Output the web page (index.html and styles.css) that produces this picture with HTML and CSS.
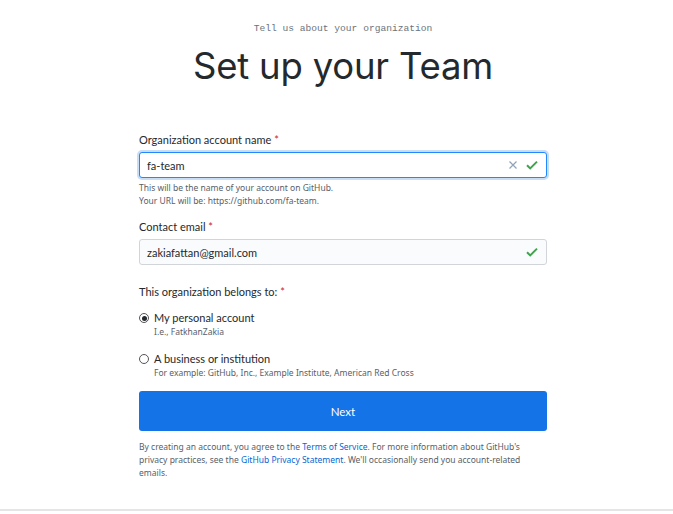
FILE: index.html
```html
<!DOCTYPE html>
<html>
<head>
<meta charset="utf-8">
<link rel="stylesheet" href="styles.css">
</head>
<body>
<div class="page">
  <header class="intro">
    <p class="eyebrow">Tell us about your organization</p>
    <h1 class="title">Set up your Team</h1>
  </header>
  <form class="form">
    <div class="field">
      <label class="label">Organization account name <span class="req">*</span></label>
      <div class="input focus">
        <span class="value">fa-team</span>
        <span class="icons">
          <svg class="x" width="10" height="10" viewBox="0 0 10 10"><path d="M1.5 1.5l7 7M8.5 1.5l-7 7" stroke="#8fa3b8" stroke-width="1.2" fill="none"/></svg>
          <svg class="check" width="12" height="10" viewBox="0 0 12 10"><path d="M1 5.2l3.2 3.2L11 1.6" stroke="#3fa34d" stroke-width="2" fill="none"/></svg>
        </span>
      </div>
      <p class="note">This will be the name of your account on GitHub.</p>
      <p class="note">Your URL will be: https://github.com/fa-team.</p>
    </div>
    <div class="field">
      <label class="label">Contact email <span class="req">*</span></label>
      <div class="input filled">
        <span class="value">zakiafattan@gmail.com</span>
        <span class="icons">
          <svg class="check" width="12" height="10" viewBox="0 0 12 10"><path d="M1 5.2l3.2 3.2L11 1.6" stroke="#3fa34d" stroke-width="2" fill="none"/></svg>
        </span>
      </div>
    </div>
    <div class="field belongs">
      <p class="label">This organization belongs to: <span class="req">*</span></p>
      <div class="radio">
        <span class="dot checked"></span>
        <div>
          <div class="opt">My personal account</div>
          <div class="sub">I.e., FatkhanZakia</div>
        </div>
      </div>
      <div class="radio">
        <span class="dot"></span>
        <div>
          <div class="opt">A business or institution</div>
          <div class="sub">For example: GitHub, Inc., Example Institute, American Red Cross</div>
        </div>
      </div>
    </div>
    <button type="button" class="next">Next</button>
    <p class="legal">By creating an account, you agree to the <a>Terms of Service</a>. For more information about GitHub's privacy practices, see the <a>GitHub Privacy Statement</a>. We'll occasionally send you account-related emails.</p>
  </form>
</div>
<div class="bottom-line"></div>
</body>
</html>
```
FILE: styles.css
```css
* { box-sizing: border-box; }
html, body { margin: 0; padding: 0; background: #fff; }
body { font-family: "Noto Sans", "Open Sans", sans-serif; color: #24292e; height: 514px; position: relative; overflow: hidden; }
.page { width: 408px; margin-left: 139px; padding-top: 22px; }
.intro { text-align: center; }
.eyebrow { font-family: "Liberation Mono", "DejaVu Sans Mono", monospace; font-size: 9.6px; color: #6a737d; margin: 0; line-height: 14px; }
.title { font-family: Inter, "Noto Sans", sans-serif; font-weight: 400; font-size: 36.5px; margin: 7px 0 0; line-height: 46px; color: #24292e; letter-spacing: -0.2px; }
.form { margin-top: 43px; }
.field { margin-bottom: 12px; }
.label { display: block; font-family: Lato, "Noto Sans", sans-serif; font-size: 11px; font-weight: 400; margin: 0 0 5px; line-height: 15px; color: #24292e; }
.req { color: #cb2431; }
.input { height: 26px; border: 1px solid #d1d5da; border-radius: 3px; display: flex; align-items: center; padding: 0 8px 0 7px; font-family: Lato, "Noto Sans", sans-serif; font-size: 11px; background: #fafbfc; }
.input.focus { border-color: #2188ff; box-shadow: 0 0 0 2px rgba(3,102,214,0.22); background: #fff; }
.value { flex: 1; }
.icons { display: flex; align-items: center; gap: 8px; }
.note { font-size: 8.5px; color: #586069; margin: 0; line-height: 13px; }
.input + .note { margin-top: 3px; }
.belongs { margin-top: 19px; margin-bottom: 12px; }
.belongs .label { margin-bottom: 11px; }
.radio { display: flex; gap: 5px; margin-bottom: 13px; }
.radio:last-child { margin-bottom: 0; }
.dot { width: 10px; height: 10px; border: 1px solid #555; border-radius: 50%; margin-top: 3px; display: flex; align-items: center; justify-content: center; flex: none; }
.dot.checked::after { content: ""; width: 5px; height: 5px; background: #24292e; border-radius: 50%; }
.opt { font-family: Lato, "Noto Sans", sans-serif; font-size: 11px; line-height: 15px; }
.sub { font-size: 8.5px; color: #586069; line-height: 13px; }
.next { display: block; width: 100%; height: 40px; background: #1473e6; color: #fff; border: 0; border-radius: 3px; font-family: Lato, "Noto Sans", sans-serif; font-size: 11.5px; margin-top: 0; }
.legal { font-size: 8.5px; color: #586069; line-height: 13px; margin: 9px 0 0; }
.legal a { color: #0366d6; }
.bottom-line { position: absolute; left: 0; right: 0; top: 509px; height: 2px; background: #e5e5e5; }
```
